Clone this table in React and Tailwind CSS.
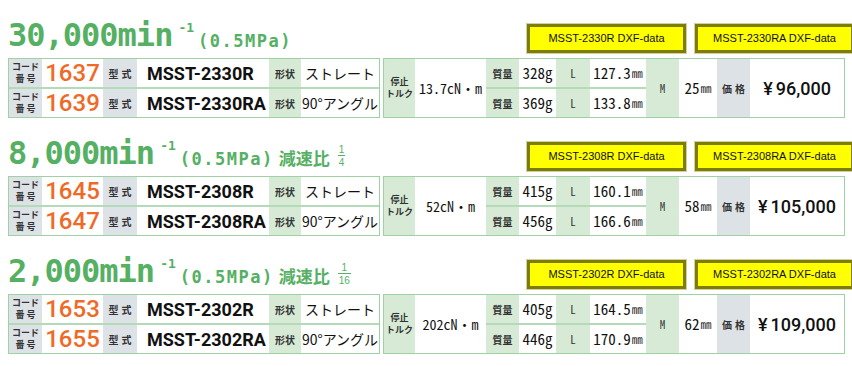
import React from 'react';

const sections = [
  {
    speed: '30,000',
    ratio: null,
    rows: [
      { code: '1637', model: 'MSST-2330R', shape: 'ストレート', mass: '328g', len: '127.3' },
      { code: '1639', model: 'MSST-2330RA', shape: '90°アングル', mass: '369g', len: '133.8' },
    ],
    torque: '13.7cN・m',
    m: '25',
    price: '96,000',
  },
  {
    speed: '8,000',
    ratio: '4',
    rows: [
      { code: '1645', model: 'MSST-2308R', shape: 'ストレート', mass: '415g', len: '160.1' },
      { code: '1647', model: 'MSST-2308RA', shape: '90°アングル', mass: '456g', len: '166.6' },
    ],
    torque: '52cN・m',
    m: '58',
    price: '105,000',
  },
  {
    speed: '2,000',
    ratio: '16',
    rows: [
      { code: '1653', model: 'MSST-2302R', shape: 'ストレート', mass: '405g', len: '164.5' },
      { code: '1655', model: 'MSST-2302RA', shape: '90°アングル', mass: '446g', len: '170.9' },
    ],
    torque: '202cN・m',
    m: '62',
    price: '109,000',
  },
];

// font stacks
const jp = "font-[family-name:'Noto_Sans_CJK_JP',sans-serif]";
const mono = "font-[family-name:'Noto_Sans_Mono_CJK_JP','DejaVu_Sans_Mono',monospace]";
const dv = "font-[family-name:'DejaVu_Sans_Mono',monospace]";
const rb = 'font-[family-name:Roboto,sans-serif]';
const lib = "font-[family-name:'Liberation_Sans',sans-serif]";

function Heading({ speed, ratio }) {
  return (
    <div className="flex items-start pt-[16px] text-[#55b063] whitespace-nowrap">
      <span className={`${dv} text-[32px] leading-[38px] font-bold tracking-[-1px]`}>{speed}min</span>
      <span className={`${dv} ml-[6px] mt-[5px] text-[13px] leading-[13px] font-bold`}>-1</span>
      <span className={`${dv} ml-[4px] mt-[15px] text-[17px] leading-[20px] font-bold tracking-[1.5px]`}>
        (0.5MPa)
      </span>
      {ratio && (
        <>
          <span className={`${jp} ml-[5px] mt-[13px] text-[17px] leading-[22px] font-bold`}>減速比</span>
          <span className={`${lib} ml-[8px] mt-[10px] flex flex-col items-center text-[10px] leading-[11px]`}>
            <span>1</span>
            <span className="border-t border-[#55b063] px-[1px] pt-[1px]">{ratio}</span>
          </span>
        </>
      )}
    </div>
  );
}

function DxfButton({ label }) {
  return (
    <div
      className={`${lib} w-[159px] h-[29px] flex items-center justify-center bg-[#ffff00] border-[3px] border-[#7d7d00] outline outline-1 outline-[#cfcfa8] text-[11px] text-[#111]`}
    >
      {label}
    </div>
  );
}

function LeftRow({ row }) {
  return (
    <div className="flex h-[28px]">
      <div className={`${jp} w-[33px] bg-[#dde2e7] flex flex-col items-center justify-center text-[9px] leading-[12px] font-bold text-[#333]`}>
        <span>コード</span>
        <span className="tracking-[2px] ml-[2px]">番号</span>
      </div>
      <div className={`${rb} w-[61px] bg-white flex items-center justify-center text-[24px] text-[#ef6a27] font-medium`}>
        {row.code}
      </div>
      <div className={`${jp} w-[34px] bg-[#dde2e7] flex items-center justify-center text-[10px] font-bold tracking-[3px] pl-[3px] text-[#333]`}>
        型式
      </div>
      <div className={`${rb} w-[132px] bg-white flex items-center pl-[10px] text-[18px] font-bold text-[#111]`}>
        {row.model}
      </div>
      <div className={`${jp} w-[32px] bg-[#d6ead6] flex items-center justify-center text-[10px] font-bold text-[#333]`}>
        形状
      </div>
      <div className={`${jp} w-[78px] bg-white flex items-center justify-center text-[14px] text-[#111]`}>
        {row.shape}
      </div>
    </div>
  );
}

function MidRow({ row }) {
  return (
    <div className="flex h-[28px]">
      <div className={`${jp} w-[33px] bg-[#d6ead6] flex items-center justify-center text-[10px] font-bold text-[#333]`}>
        質量
      </div>
      <div className={`${mono} w-[37px] bg-white flex items-center justify-center text-[15px] text-[#111]`}>
        {row.mass}
      </div>
      <div className={`${mono} w-[34px] bg-[#d6ead6] flex items-center justify-center text-[11px] text-[#333]`}>
        L
      </div>
      <div className={`${mono} w-[56px] bg-white flex items-center justify-center text-[15px] text-[#111]`}>
        {row.len}
        <span className="text-[11px] ml-[1px]">㎜</span>
      </div>
    </div>
  );
}

function Section({ s }) {
  return (
    <div>
      <div className="flex justify-between h-[58px]">
        <Heading speed={s.speed} ratio={s.ratio} />
        <div className="flex gap-[9px] items-end pb-[5px] -mr-[2px]">
          <DxfButton label={`${s.rows[0].model} DXF-data`} />
          <DxfButton label={`${s.rows[1].model} DXF-data`} />
        </div>
      </div>
      <div className="flex gap-[3px]">
        <div className="w-[372px] border border-[#9ed2a5]">
          <LeftRow row={s.rows[0]} />
          <div className="h-[2px] bg-[#b3dbb8]" />
          <LeftRow row={s.rows[1]} />
        </div>
        <div className="w-[462px] h-[60px] border border-[#9ed2a5] flex">
          <div className={`${jp} w-[31px] bg-[#d6ead6] flex flex-col items-center justify-center text-[9px] leading-[12px] font-bold text-[#333]`}>
            <span>停止</span>
            <span>トルク</span>
          </div>
          <div className={`${mono} w-[71px] bg-white flex items-center justify-center text-[14px] text-[#111]`}>
            {s.torque}
          </div>
          <div className="flex flex-col">
            <MidRow row={s.rows[0]} />
            <div className="h-[2px] bg-[#b3dbb8]" />
            <MidRow row={s.rows[1]} />
          </div>
          <div className={`${mono} w-[33px] bg-[#d6ead6] flex items-center justify-center text-[11px] text-[#333]`}>
            M
          </div>
          <div className={`${mono} w-[38px] bg-white flex items-center justify-center text-[15px] text-[#111]`}>
            {s.m}
            <span className="text-[11px] ml-[1px]">㎜</span>
          </div>
          <div className={`${jp} w-[33px] bg-[#dde2e7] flex items-center justify-center text-[10px] font-bold tracking-[3px] pl-[3px] text-[#333]`}>
            価格
          </div>
          <div className={`${rb} flex-1 bg-white flex items-center justify-center text-[18px] font-medium text-[#111]`}>
            <span className="mr-[3px]">¥</span>
            {s.price}
          </div>
        </div>
      </div>
    </div>
  );
}

export default function App() {
  return (
    <div className="w-[852px] h-[366px] bg-white pl-[8px] overflow-hidden">
      {sections.map((s) => (
        <Section key={s.speed} s={s} />
      ))}
    </div>
  );
}
